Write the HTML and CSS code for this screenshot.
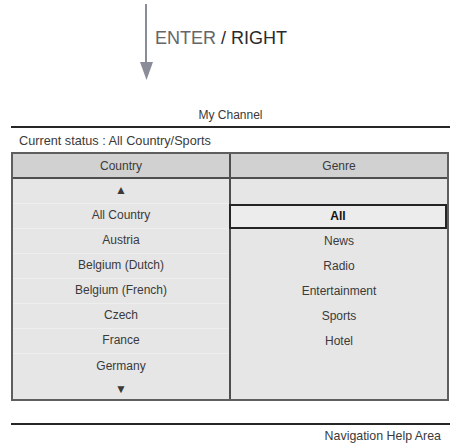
FILE: index.html
```html
<!DOCTYPE html>
<html>
<head>
<meta charset="utf-8">
<link rel="stylesheet" href="styles.css">
</head>
<body>
<div class="top">
  <svg class="arrow" width="16" height="80" viewBox="0 0 16 80">
    <rect x="6" y="0" width="2" height="62" fill="#8a8d99"/>
    <polygon points="1,58 14,58 7.5,76" fill="#8a8d99"/>
  </svg>
  <div class="label"><span class="enter">ENTER</span> / RIGHT</div>
</div>
<div class="panel">
  <div class="title">My Channel</div>
  <div class="status">Current status : All Country/Sports</div>
  <div class="table">
    <div class="col left">
      <div class="head">Country</div>
      <div class="row sep">▲</div>
      <div class="row sep">All Country</div>
      <div class="row sep">Austria</div>
      <div class="row sep">Belgium (Dutch)</div>
      <div class="row sep">Belgium (French)</div>
      <div class="row sep">Czech</div>
      <div class="row sep">France</div>
      <div class="row">Germany</div>
      <div class="row last">▼</div>
    </div>
    <div class="col right">
      <div class="head">Genre</div>
      <div class="row"></div>
      <div class="row selected">All</div>
      <div class="row">News</div>
      <div class="row">Radio</div>
      <div class="row">Entertainment</div>
      <div class="row">Sports</div>
      <div class="row">Hotel</div>
      <div class="row"></div>
      <div class="row last"></div>
    </div>
  </div>
  <div class="help">Navigation Help Area</div>
</div>
</body>
</html>
```
FILE: styles.css
```css
html, body {
  margin: 0;
  padding: 0;
  background: #ffffff;
}
body {
  font-family: "Liberation Sans", Arial, Helvetica, sans-serif;
  color: #3a3a3a;
  font-size: 12px;
}
.top {
  height: 108px;
  display: flex;
  padding-left: 139px;
  padding-top: 4px;
  box-sizing: border-box;
}
.arrow {
  display: block;
}
.label {
  margin-top: 24px;
  margin-left: 0;
  font-size: 18px;
  color: #2a2a2a;
}
.enter {
  color: #666666;
}
.panel {
  margin-left: 11px;
  width: 439px;
}
.title {
  text-align: center;
  line-height: 14px;
  padding-bottom: 4px;
  border-bottom: 2px solid #262626;
}
.status {
  padding-left: 8px;
  height: 24px;
  line-height: 26px;
  font-size: 12.7px;
}
.table {
  width: 438px;
  box-sizing: border-box;
  border: 2px solid #5e5e5e;
  display: grid;
  grid-template-columns: 218px 1fr;
  background: #e6e6e6;
}
.col {
  display: flex;
  flex-direction: column;
}
.col.left {
  border-right: 2px solid #4e4e4e;
}
.head {
  height: 23px;
  line-height: 24px;
  background: #d1d1d1;
  border-bottom: 2px solid #4e4e4e;
  text-align: center;
}
.row {
  height: 25px;
  line-height: 24px;
  text-align: center;
  box-sizing: border-box;
}
.row.sep {
  border-bottom: 1px solid #eeeeee;
  line-height: 23px;
}
.row.last {
  height: 20px;
  line-height: 20px;
}
.col.right .row.selected {
  margin-left: -2px;
  border: 2px solid #242424;
  line-height: 21px;
  background: #ececec;
  color: #111;
  font-weight: bold;
}
.help {
  margin-top: 22px;
  border-top: 2px solid #262626;
  text-align: right;
  padding-right: 9px;
  line-height: 22px;
  font-size: 12.4px;
}
```
